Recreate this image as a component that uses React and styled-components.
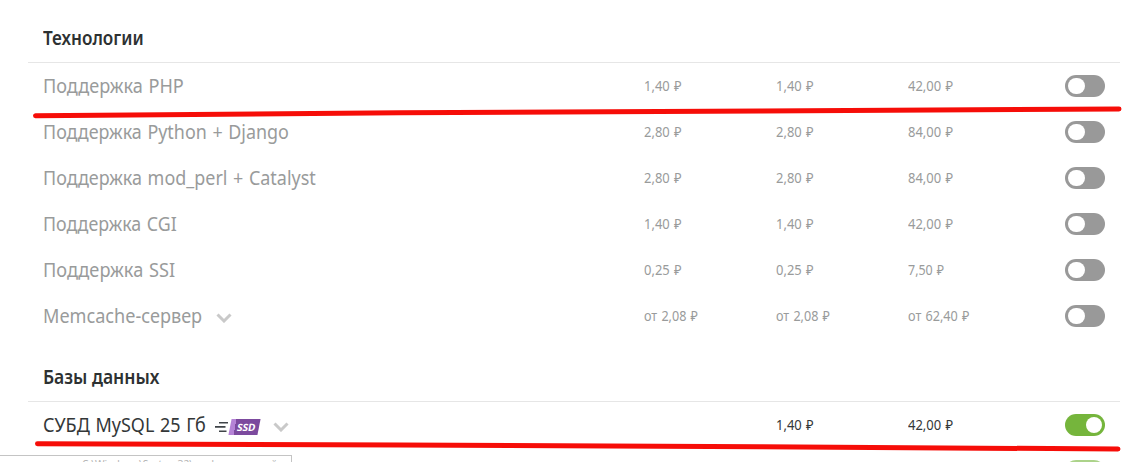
import React, { useLayoutEffect, useRef, useState } from 'react'
import styled, { createGlobalStyle } from 'styled-components'

const sections = [
  {
    title: 'Технологии',
    width: 101,
    rows: [
      { name: 'Поддержка PHP', width: 141, prices: ['1,40 ₽', '1,40 ₽', '42,00 ₽'] },
      { name: 'Поддержка Python + Django', width: 246, prices: ['2,80 ₽', '2,80 ₽', '84,00 ₽'] },
      { name: 'Поддержка mod_perl + Catalyst', width: 273, prices: ['2,80 ₽', '2,80 ₽', '84,00 ₽'] },
      { name: 'Поддержка CGI', width: 134, prices: ['1,40 ₽', '1,40 ₽', '42,00 ₽'] },
      { name: 'Поддержка SSI', width: 132, prices: ['0,25 ₽', '0,25 ₽', '7,50 ₽'] },
      { name: 'Memcache-сервер', width: 159, more: true, prices: ['от 2,08 ₽', 'от 2,08 ₽', 'от 62,40 ₽'] },
    ],
  },
  {
    title: 'Базы данных',
    width: 116,
    rows: [
      { name: 'СУБД MySQL 25 Гб', width: 163, on: true, ssd: true, more: true, prices: ['', '1,40 ₽', '42,00 ₽'] },
      { name: '', width: 0, on: true, pending: true, prices: ['', '', ''] },
    ],
  },
]

// keyed by text length
const priceWidths = { 6: 38, 7: 45.5, 9: 54, 10: 61.5 }

// Squeezes or stretches a label so that it takes exactly the given width
function Fit({ width, children }) {
  const ref = useRef(null)
  const [scale, setScale] = useState(1)

  useLayoutEffect(() => {
    const natural = ref.current.offsetWidth
    if (natural) setScale(width / natural)
  }, [width, children])

  return (
    <FitBox style={{ width }}>
      <FitText ref={ref} style={{ transform: `scaleX(${scale})` }}>{children}</FitText>
    </FitBox>
  )
}

function Price({ value }) {
  const width = value.startsWith('7,50') ? 36.5 : priceWidths[value.length]
  return <PriceCell>{value && <Fit width={width}>{value}</Fit>}</PriceCell>
}

function SsdBadge() {
  return (
    <Ssd>
      <svg width="14" height="14" viewBox="0 0 14 14" fill="none" stroke="#3f4448" strokeWidth="1.6">
        <path d="M4 2.8H13M0 6.9H10.5M4 11.3H11.5" />
      </svg>
      <SsdLabel><span>SSD</span></SsdLabel>
    </Ssd>
  )
}

function Row({ item }) {
  return (
    <RowBox $on={item.on}>
      <Name>
        {item.name && <Fit width={item.width}>{item.name}</Fit>}
        {item.ssd && <SsdBadge />}
        {item.more && (
          <Chevron width="16" height="10" viewBox="0 0 16 10">
            <path d="M1.5 1.5L8 8L14.5 1.5" fill="none" stroke="#c9c9c9" strokeWidth="3" />
          </Chevron>
        )}
      </Name>
      {item.prices.map((p, i) => <Price key={i} value={p} />)}
      <Toggle $on={item.on} $pending={item.pending}><Knob /></Toggle>
    </RowBox>
  )
}

export default function App() {
  return (
    <Page>
      <GlobalStyle />
      {sections.map((s) => (
        <Section key={s.title}>
          <Title><Fit width={s.width}>{s.title}</Fit></Title>
          {s.rows.map((item, i) => <Row key={i} item={item} />)}
        </Section>
      ))}
      <Marks viewBox="0 0 1142 462">
        <path d="M35.5 115.8L400 112.8L760 111L1119 109" />
        <path d="M37.5 443.8L400 445L760 446.8L1118 449" />
      </Marks>
      <StatusBar><Fit width={195}>C:\Windows\System32\cmd.exe - версий</Fit></StatusBar>
    </Page>
  )
}

const GlobalStyle = createGlobalStyle`
  body {
    margin: 0;
    background: #fff;
    overflow: hidden;
  }
`

const Page = styled.div`
  position: relative;
  box-sizing: border-box;
  width: 1142px;
  height: 462px;
  padding: 14px 22px 0 28px;
  overflow: hidden;
  font-family: 'Noto Sans', 'Open Sans', sans-serif;
  font-stretch: 87.5%;
`

const Section = styled.section`
  margin-bottom: 14px;
`

const Title = styled.h2`
  display: flex;
  align-items: center;
  box-sizing: border-box;
  height: 49px;
  margin: 0;
  padding-left: 15px;
  border-bottom: 1px solid #e6e6e6;
  color: #2d3132;
  font-size: 19px;
  font-weight: 600;
`

const RowBox = styled.div`
  display: grid;
  grid-template-columns: 601px 132px 132px 157px 40px;
  align-items: center;
  height: 46px;
  padding-left: 15px;
  color: ${(props) => (props.$on ? '#333738' : '#999b9b')};
`

const Name = styled.div`
  display: flex;
  align-items: center;
  font-size: 19px;
  word-spacing: 1px;
`

const PriceCell = styled.div`
  display: flex;
  padding-bottom: 2px;
  font-size: 14px;
  word-spacing: 1px;
`

const FitBox = styled.span`
  display: inline-block;
  flex: none;
  white-space: nowrap;
`

const FitText = styled.span`
  display: inline-block;
  transform-origin: 0 50%;
`

const Chevron = styled.svg`
  margin: 4px 0 0 14px;
`

const Toggle = styled.div`
  display: flex;
  align-items: center;
  justify-content: ${(props) => (props.$on ? 'flex-end' : 'flex-start')};
  box-sizing: border-box;
  width: 40px;
  height: 22px;
  padding: 0 3px;
  border-radius: 11px;
  background: ${(props) => (props.$on ? '#75b53c' : '#999')};
  opacity: ${(props) => (props.$pending ? 0.6 : 1)};
`

const Knob = styled.div`
  width: 16.5px;
  height: 16.5px;
  border-radius: 50%;
  background: #fff;
`

const Ssd = styled.span`
  display: flex;
  align-items: center;
  margin: 3px 0 0 9px;
`

const SsdLabel = styled.span`
  display: flex;
  align-items: center;
  justify-content: center;
  box-sizing: border-box;
  width: 29px;
  height: 16px;
  margin-left: 0.5px;
  padding-left: 4px;
  transform: skewX(-11deg);
  background: linear-gradient(90deg, #b583d6 5px, #7c4a9e 5px);
  color: #fff;
  font-size: 10px;
  font-weight: 700;
  line-height: 16px;
`

// hand-drawn red underlines over the table
const Marks = styled.svg`
  position: absolute;
  top: 0;
  left: 0;
  width: 1142px;
  height: 462px;
  fill: none;
  stroke: #f60d08;
  stroke-width: 5;
  stroke-linecap: round;
`

// browser status bubble, cut by the bottom edge
const StatusBar = styled.div`
  position: absolute;
  left: -1px;
  top: 455px;
  box-sizing: border-box;
  width: 293px;
  height: 24px;
  padding: 1px 0 0 82px;
  border: 1px solid #c4c4c4;
  background: #fff;
  color: #b4b4b4;
  font-size: 11px;
  line-height: 14px;
`
